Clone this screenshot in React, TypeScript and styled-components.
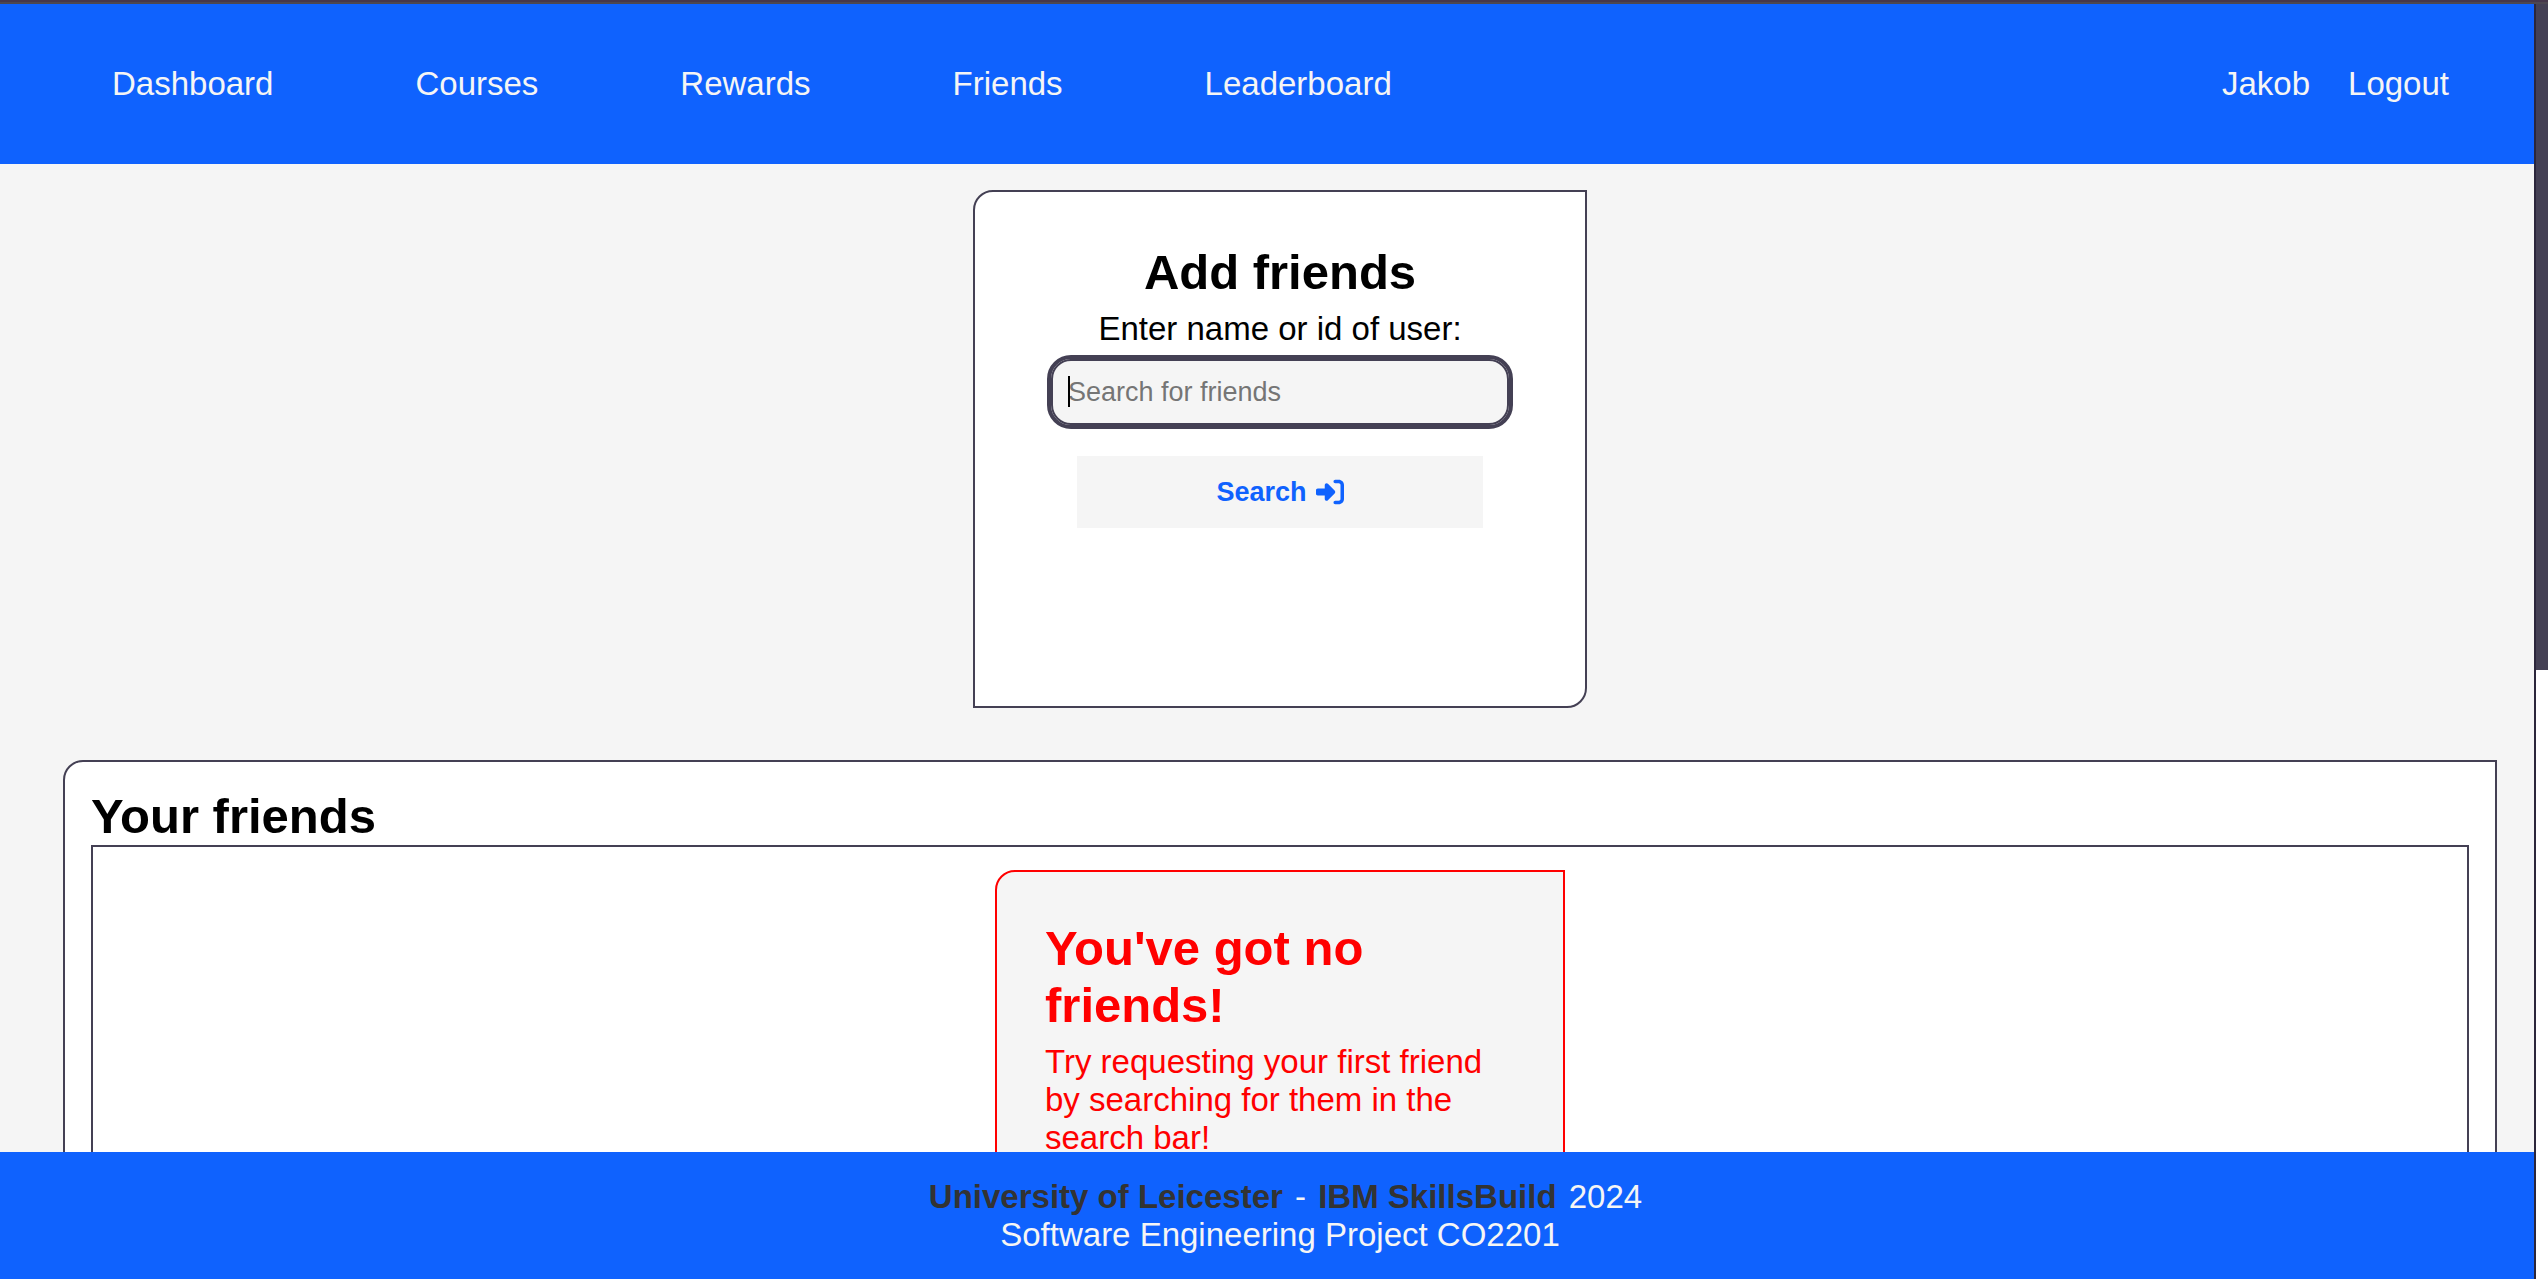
import { useState } from "react";
import styled, { createGlobalStyle } from "styled-components";
import { FaRightToBracket } from "react-icons/fa6";

const colors = {
  blue: "#0f62fe",
  slate: "#444054",
  edge: "#2b263b",
  light: "#f5f5f5",
  charcoal: "#333333",
};

const GlobalStyle = createGlobalStyle`
  * { box-sizing: border-box; margin: 0; padding: 0; }
  html, body { background: #ffffff; overflow: hidden; }
  body {
    font-family: "Liberation Sans", Arial, sans-serif;
    font-size: 33px;
    line-height: 38px;
    color: #000000;
  }
`;

const Window = styled.div`
  display: flex;
  flex-direction: column;
  height: 100vh;
`;

const TopEdge = styled.div`
  flex: none;
  height: 4px;
  background: #4d4751;
  border-top: 2px solid #46374b;
`;

const Body = styled.div`
  flex: 1;
  min-height: 0;
  display: flex;
`;

const Page = styled.div`
  flex: 1;
  min-width: 0;
  display: flex;
  flex-direction: column;
  background: ${colors.light};
`;

const ScrollTrack = styled.div`
  flex: none;
  width: 14px;
  border-left: 2px solid ${colors.edge};
  background: #ffffff;
`;

const ScrollThumb = styled.div`
  height: 666px;
  background: ${colors.slate};
`;

const Header = styled.header`
  flex: none;
  display: flex;
  align-items: center;
  justify-content: space-between;
  height: 160px;
  padding: 0 85px 0 112px;
  background: ${colors.blue};
`;

const NavGroup = styled.nav<{ $gap: number }>`
  display: flex;
  gap: ${(p) => p.$gap}px;
`;

const NavLink = styled.a`
  color: ${colors.light};
  text-decoration: none;
`;

const Main = styled.main`
  flex: 1;
  min-height: 0;
  overflow: hidden;
  display: flex;
  flex-direction: column;
  align-items: center;
  gap: 52px;
  padding: 26px 37px 0 63px;
`;

const SearchCard = styled.form`
  flex: none;
  width: 614px;
  height: 518px;
  padding: 52px;
  display: flex;
  flex-direction: column;
  align-items: center;
  background: #ffffff;
  border: 2px solid ${colors.slate};
  border-radius: 20px 0;
`;

const Heading = styled.h2`
  font-size: 49px;
  line-height: 57px;
  font-weight: bold;
`;

const Label = styled.label`
  margin: 9px 0 11px;
`;

const Field = styled.div`
  position: relative;
  width: 458px;
  margin-bottom: 31px;
`;

const Input = styled.input`
  display: block;
  width: 100%;
  height: 66px;
  padding: 0 15px;
  font: inherit;
  font-size: 27px;
  background: ${colors.light};
  border: 2px solid ${colors.slate};
  border-radius: 20px;
  outline: 4px solid ${colors.slate};
  caret-color: transparent;
  &::placeholder { color: #757575; opacity: 1; }
`;

const Caret = styled.span`
  position: absolute;
  left: 17px;
  top: 17px;
  width: 2px;
  height: 31px;
  background: #000000;
`;

const SearchButton = styled.button`
  display: flex;
  align-items: center;
  justify-content: center;
  gap: 9px;
  width: 406px;
  height: 72px;
  font: inherit;
  font-size: 27px;
  font-weight: bold;
  color: ${colors.blue};
  background: ${colors.light};
  border: none;
  cursor: pointer;
`;

const FriendsPanel = styled.section`
  flex: 1 0 auto;
  align-self: stretch;
  display: flex;
  flex-direction: column;
  padding: 26px;
  background: #ffffff;
  border: 2px solid ${colors.slate};
  border-radius: 20px 0;
`;

const FriendsList = styled.div`
  flex: 1;
  display: flex;
  justify-content: center;
  align-items: flex-start;
  padding: 23px;
  border: 2px solid ${colors.slate};
`;

const EmptyCard = styled.article`
  width: 570px;
  padding: 48px;
  color: #ff0000;
  background: ${colors.light};
  border: 2px solid #ff0000;
  border-radius: 20px 0;
`;

const EmptyText = styled.p`
  margin-top: 9px;
`;

const Footer = styled.footer`
  flex: none;
  padding: 26px 0 25px 26px;
  text-align: center;
  color: ${colors.light};
  background: ${colors.blue};
`;

const Partners = styled.p`
  padding-left: 8px;
`;

const FooterLink = styled.a`
  margin: 0 3px;
  font-weight: bold;
  color: ${colors.charcoal};
  text-decoration: none;
`;

const links = ["Dashboard", "Courses", "Rewards", "Friends", "Leaderboard"];
const accountLinks = ["Jakob", "Logout"];

export default function App() {
  const [query, setQuery] = useState("");

  return (
    <Window>
      <GlobalStyle />
      <TopEdge />
      <Body>
        <Page>
          <Header>
            <NavGroup $gap={142} aria-label="Main">
              {links.map((l) => (
                <NavLink key={l} href={`#${l.toLowerCase()}`}>{l}</NavLink>
              ))}
            </NavGroup>
            <NavGroup $gap={38} aria-label="Account">
              {accountLinks.map((l) => (
                <NavLink key={l} href={`#${l.toLowerCase()}`}>{l}</NavLink>
              ))}
            </NavGroup>
          </Header>
          <Main>
            <SearchCard onSubmit={(e) => e.preventDefault()}>
              <Heading>Add friends</Heading>
              <Label htmlFor="friend-query">Enter name or id of user:</Label>
              <Field>
                <Input
                  id="friend-query"
                  type="text"
                  placeholder="Search for friends"
                  value={query}
                  onChange={(e) => setQuery(e.target.value)}
                />
                {query === "" && <Caret />}
              </Field>
              <SearchButton type="submit">
                Search <FaRightToBracket size={28} aria-hidden />
              </SearchButton>
            </SearchCard>
            <FriendsPanel>
              <Heading>Your friends</Heading>
              <FriendsList>
                <EmptyCard>
                  <Heading>You've got no friends!</Heading>
                  <EmptyText>
                    Try requesting your first friend by searching for them in the search bar!
                  </EmptyText>
                </EmptyCard>
              </FriendsList>
            </FriendsPanel>
          </Main>
          <Footer>
            <Partners>
              <FooterLink href="#leicester">University of Leicester</FooterLink> -{" "}
              <FooterLink href="#skillsbuild">IBM SkillsBuild</FooterLink> 2024
            </Partners>
            <p>Software Engineering Project CO2201</p>
          </Footer>
        </Page>
        <ScrollTrack>
          <ScrollThumb />
        </ScrollTrack>
      </Body>
    </Window>
  );
}
